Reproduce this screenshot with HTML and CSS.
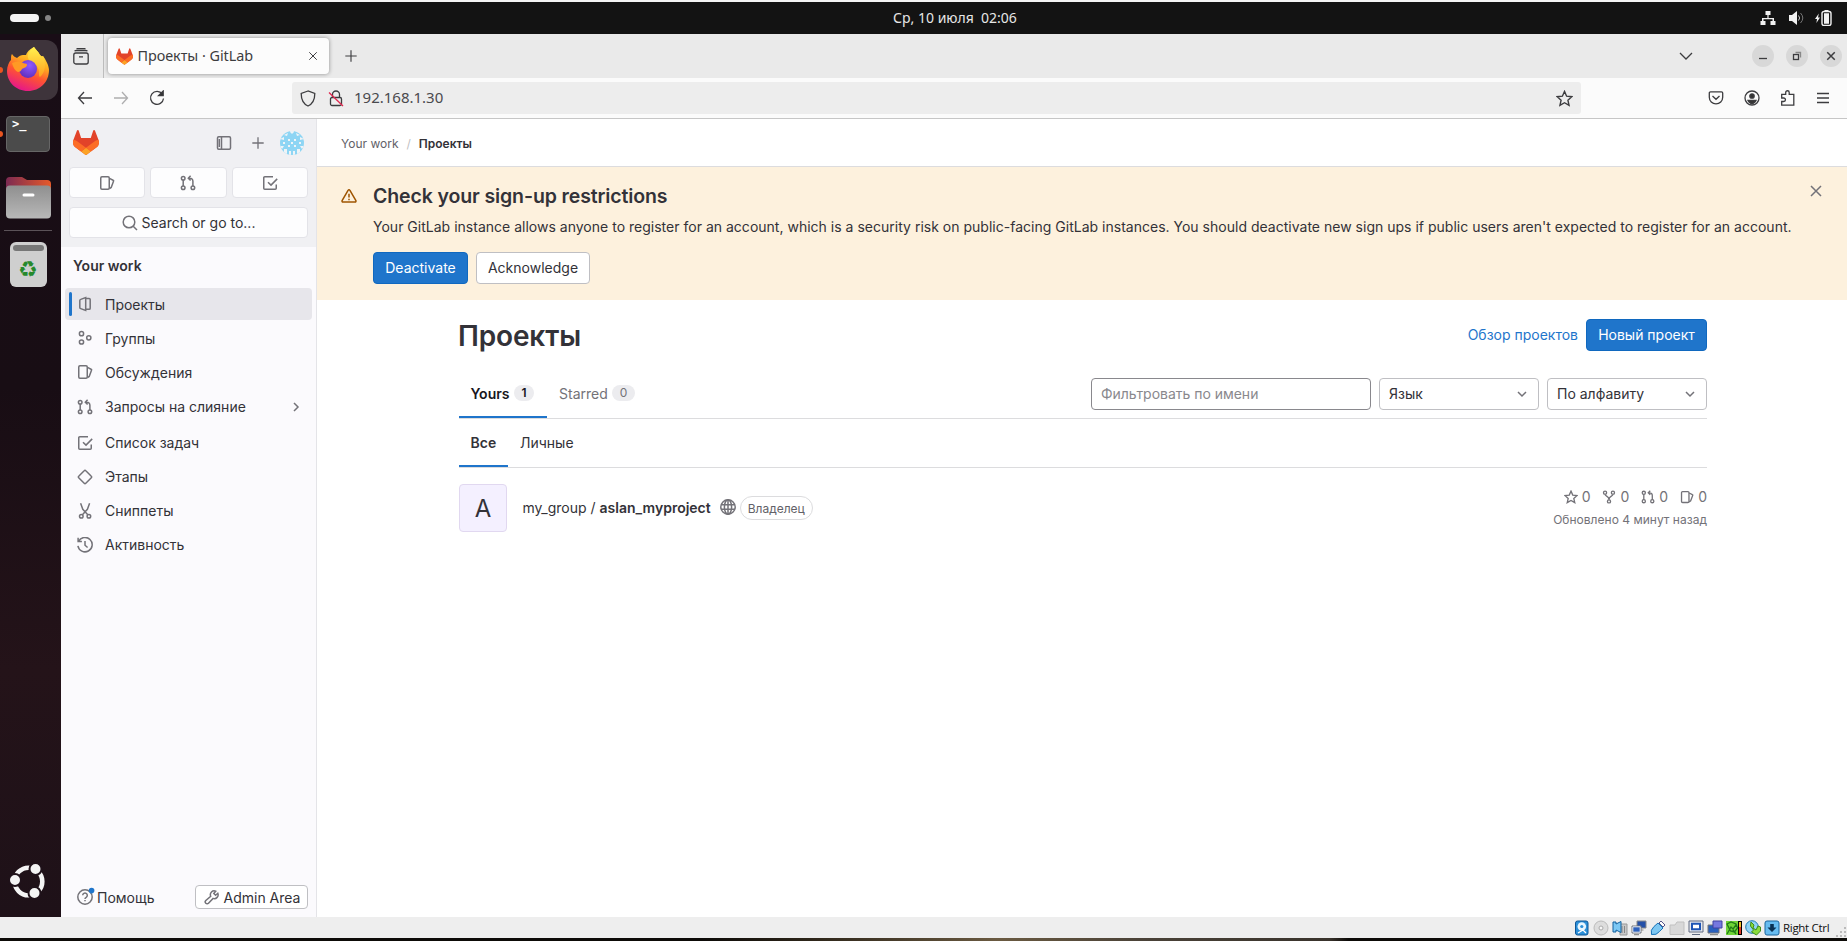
FILE: index.html
```html
<!DOCTYPE html>
<html lang="ru">
<head>
<meta charset="utf-8">
<title>Проекты · GitLab</title>
<link rel="stylesheet" href="styles.css">
</head>
<body>
<svg class="sprite" aria-hidden="true">
  <symbol id="tanuki" viewBox="0 0 25 24">
    <path fill="#E24329" d="M24.507 9.5l-.034-.09L21.082.562a.896.896 0 0 0-1.694.091l-2.29 7.01H7.825L5.535.653a.898.898 0 0 0-1.694-.09L.451 9.411.416 9.5a6.297 6.297 0 0 0 2.09 7.278l.012.01.03.022 5.16 3.867 2.56 1.935 1.554 1.176a1.051 1.051 0 0 0 1.268 0l1.555-1.176 2.56-1.935 5.197-3.89.014-.01A6.297 6.297 0 0 0 24.507 9.5z"/>
    <path fill="#FC6D26" d="M24.507 9.5l-.034-.09a11.44 11.44 0 0 0-4.56 2.051l-7.447 5.632 4.742 3.584 5.197-3.89.014-.01A6.297 6.297 0 0 0 24.507 9.5z"/>
    <path fill="#FCA326" d="M7.707 20.677l2.56 1.935 1.555 1.176a1.051 1.051 0 0 0 1.268 0l1.555-1.176 2.56-1.935-4.743-3.584-4.755 3.584z"/>
    <path fill="#FC6D26" d="M5.01 11.461a11.43 11.43 0 0 0-4.56-2.05L.416 9.5a6.297 6.297 0 0 0 2.09 7.278l.012.01.03.022 5.16 3.867 4.745-3.584-7.444-5.632z"/>
  </symbol>
  <symbol id="issues" viewBox="0 0 16 16"><rect x="1.75" y="1.75" width="8.5" height="12.5" rx="1.2"/><path d="M10.5 3.400l3.600 1.800c.5.2.6.6.4 1L12.200 12.400l-1.700 1.200"/></symbol>
  <symbol id="merge" viewBox="0 0 16 16"><circle cx="3.2" cy="3.2" r="1.8"/><circle cx="3.2" cy="12.8" r="1.8"/><circle cx="12.9" cy="12.8" r="1.8"/><path d="M3.2 5v6M12.9 11V6.2a3 3 0 0 0-3-3H8.6M10.600.8L8.300 3.200l2.300 2.400"/></symbol>
  <symbol id="todo" viewBox="0 0 16 16"><path d="M11 1.75H2.8A1.05 1.05 0 0 0 1.75 2.8v10.4c0 .6.45 1.05 1.05 1.05h10.4c.6 0 1.05-.45 1.05-1.05V9.5M6 7.2l3 2.9 6.2-6.2"/></symbol>
  <symbol id="project" viewBox="0 0 16 16"><path d="M8.700 1.500v13l-5-1.900c-.5-.2-.9-.7-.9-1.200V4.600c0-.5.3-1 .9-1.200zM8.700 2.500h3.400c.6 0 1.100.5 1.100 1.100v8.600c0 .6-.5 1.100-1.100 1.100H8.700"/></symbol>
  <symbol id="group" viewBox="0 0 16 16"><circle cx="4.500" cy="3.700" r="2.100"/><circle cx="4.500" cy="12" r="2.100"/><circle cx="11.800" cy="7.800" r="2.100"/></symbol>
  <symbol id="milestone" viewBox="0 0 16 16"><path d="M7.200 1.700L1.700 7.200a1.100 1.100 0 0 0 0 1.600l5.500 5.500c.45.45 1.150.45 1.600 0l5.500-5.500a1.100 1.100 0 0 0 0-1.600L8.800 1.700a1.100 1.100 0 0 0-1.600 0z"/></symbol>
  <symbol id="snippet" viewBox="0 0 16 16"><circle cx="4.300" cy="13.200" r="1.800"/><circle cx="11.900" cy="13.200" r="1.800"/><path d="M3.600.3l2.200 6 5 5.500M12.600.3l-2.200 6-5 5.500"/></symbol>
  <symbol id="history" viewBox="0 0 16 16"><path d="M1.100.8v3.800h3.800M1.500 4.500a7.200 7.200 0 1 1-.6 4.400M8 4v4.200l2.600 2.300"/></symbol>
  <symbol id="star" viewBox="0 0 16 16"><path d="M8 1.300l2 4.500 4.900.5-3.700 3.300 1.100 4.900L8 12l-4.300 2.500 1.100-4.900L1.100 6.300 6 5.800z"/></symbol>
  <symbol id="fork" viewBox="0 0 16 16"><circle cx="3.500" cy="3" r="1.800"/><circle cx="12.500" cy="3" r="1.800"/><circle cx="8" cy="13" r="1.800"/><path d="M3.500 4.800c0 2.700 4.500 1.800 4.500 6.400 0-4.600 4.500-3.700 4.500-6.400"/></symbol>
  <symbol id="globe" viewBox="0 0 16 16"><circle cx="8" cy="8" r="7.200"/><ellipse cx="8" cy="8" rx="3.600" ry="7.200"/><path d="M1 5.700h14M1 10.300h14M8 .8v14.400"/></symbol>
  <symbol id="cross" viewBox="0 0 16 16"><path d="M3 3l10 10M13 3L3 13"/></symbol>
  <symbol id="plus" viewBox="0 0 16 16"><path d="M8 1.500v13M1.500 8h13"/></symbol>
  <symbol id="down" viewBox="0 0 16 16"><path d="M4 6l4 4 4-4"/></symbol>
</svg>

<div class="topbar">
  <div class="workspaces"><i class="pill"></i><i class="dot"></i></div>
  <div class="clock">Ср, 10 июля&nbsp; 02:06</div>
  <div class="tray">
    <svg width="16" height="16" viewBox="0 0 16 16"><path fill="#f2f2f2" d="M5.500 1h5v4H8.600v3H14v3h1.500v4h-5v-4h2V9.300h-9V11h2v4h-5v-4H2V8h5.400V5H5.500z"/></svg>
    <svg width="16" height="16" viewBox="0 0 16 16"><path fill="#f2f2f2" d="M0 5h3l5-4v14l-5-4H0z"/><path fill="none" stroke="#c5c5c5" d="M9.500 5.500q2.300 2.500 0 5"/><path fill="none" stroke="#777" d="M11.500 3q4.600 5 0 10"/></svg>
    <svg class="battery" width="17" height="16" viewBox="0 0 17 16"><path fill="#f2f2f2" d="M3.800 3.500L0 9h2l-.6 4L5 7.500H3z"/><rect x="7" y="1.500" width="9" height="14" rx="2" fill="none" stroke="#f2f2f2" stroke-width="1.400"/><path fill="#f2f2f2" d="M9 3.300h5v10.400H9zM9.500 0h4v1.500h-4z"/></svg>
  </div>
</div>

<div class="desk">
  <div class="dock">
    <div class="tile">
      <svg width="42" height="44" viewBox="0 0 42 44">
        <defs>
          <linearGradient id="ff" x1=".75" y1="0" x2=".35" y2="1"><stop offset="0" stop-color="#fff04a"/><stop offset=".35" stop-color="#ffae20"/><stop offset=".62" stop-color="#ff5530"/><stop offset="1" stop-color="#e5158c"/></linearGradient>
          <radialGradient id="fp" cx=".6" cy=".3" r=".8"><stop offset="0" stop-color="#9059ff"/><stop offset="1" stop-color="#5b2bb5"/></radialGradient>
          <linearGradient id="fy" x1="0" y1="0" x2="0" y2="1"><stop offset="0" stop-color="#fff24f"/><stop offset="1" stop-color="#ffa01e"/></linearGradient>
        </defs>
        <path fill="url(#ff)" d="M27 0c2 3 4 4 6 8 1 1 2 2 3 1 3 4 6 10 6 14 0 12-9 21-21 21S0 35 0 24c0-5 2-9 4-11 0-3 0-5 1-6 1 2 3 3 5 4 2-2 4-3 6-3l3 0c2-5 5-6 8-8z"/>
        <path fill="url(#fy)" d="M27 0c2 3 4 4 6 8 1 1 2 2 3 1 3 7 3 16-3 21-2-1 0-5-2-9-3-5-8-5-10-10-1-5 3-9 6-11z"/>
        <circle cx="21" cy="22" r="9" fill="url(#fp)"/>
        <path fill="#ff9a25" d="M5 16c4-2 8-2 11 0 2 1 4 0 4 2s-3 3-5 4c-1 2-2 3-4 3-3-1-5-5-6-9z"/>
      </svg>
    </div>
    <i class="run run-one"></i><i class="run run-two"></i>
    <div class="terminal"><b>&gt;_</b></div>
    <svg class="files" width="45" height="42" viewBox="0 0 45 42">
      <defs><linearGradient id="fa"><stop offset="0" stop-color="#7c2a52"/><stop offset="1" stop-color="#e65a2a"/></linearGradient><linearGradient id="fb" x2="0" y2="1"><stop offset="0" stop-color="#8f8f8f"/><stop offset="1" stop-color="#b8b8b8"/></linearGradient></defs>
      <path fill="url(#fa)" d="M0 4q0-4 4-4h12l5 3h20q4 0 4 4v10H0z"/><rect y="8.500" width="45" height="33" rx="4" fill="url(#fb)"/><rect x="16.500" y="16.500" width="12" height="3" rx="1.500" fill="#fff"/>
    </svg>
    <i class="rule"></i>
    <div class="trash"><i></i><b>&#9851;</b></div>
    <svg class="ubuntu" width="36" height="36" viewBox="0 0 36 36">
      <circle cx="19.500" cy="18.500" r="13.800" fill="none" stroke="#f4f4f4" stroke-width="4.600"/>
      <g fill="#f4f4f4" stroke="#1f121a" stroke-width="2"><circle cx="6" cy="17" r="6"/><circle cx="26.500" cy="6" r="6"/><circle cx="25.500" cy="30" r="6"/></g>
    </svg>
  </div>

  <div class="browser">
    <div class="tabstrip">
      <div class="view"><svg width="16" height="17" viewBox="0 0 16 17" class="ink"><rect x=".8" y="5" width="14.400" height="11" rx="2"/><path d="M1.500 3q1-.5 2-.5h9q1 0 2 .5M3.500.7h9M6 8.800h4"/></svg></div>
      <div class="tab"><svg width="17" height="17"><use href="#tanuki"/></svg><span class="tab-title">Проекты · GitLab</span><svg width="12" height="12" class="ink"><use href="#cross"/></svg></div>
      <svg width="14" height="14" class="ink newtab"><use href="#plus"/></svg>
      <svg width="14" height="8" viewBox="0 0 14 8" class="ink tabs-more"><path d="M1 1l6 6 6-6"/></svg>
      <div class="winbtns">
        <span><svg width="10" height="10" viewBox="0 0 10 10" class="ink"><path d="M1 7.500h8"/></svg></span>
        <span><svg width="10" height="10" viewBox="0 0 10 10" class="ink"><rect x="1.500" y="3.500" width="5" height="5"/><path stroke="#888" d="M3.500 1.500h5v5"/></svg></span>
        <span><svg width="12" height="12" class="ink bold"><use href="#cross"/></svg></span>
      </div>
    </div>
    <div class="toolbar">
      <div class="nav-btns">
        <svg width="16" height="16" viewBox="0 0 16 16" class="ink"><path d="M15 8H1.500M7 2L1.500 8 7 14"/></svg>
        <svg width="16" height="16" viewBox="0 0 16 16" class="ink off"><path d="M1 8h13.500M9 2l5.500 6L9 14"/></svg>
        <svg width="16" height="16" viewBox="0 0 16 16" class="ink"><path d="M13.300 4A6.500 6.500 0 1 0 14.500 8.500"/><path fill="#333" d="M14.200 1v4.600H9.600z"/></svg>
      </div>
      <div class="urlbar">
        <svg width="16" height="17" viewBox="0 0 16 17" class="ink"><path d="M8 1L1.200 3.500c0 6 1.300 10 6.800 12.500 5.500-2.500 6.800-6.500 6.800-12.500z"/></svg>
        <svg width="16" height="17" viewBox="0 0 16 17" class="ink lock"><rect x="2.500" y="7.500" width="11" height="8" rx="1.500"/><path d="M4.500 7V4.500a3.500 3.500 0 0 1 7 0V7"/><path stroke="#e0284f" d="M1 2.500l14 13.500"/></svg>
        <span class="url">192.168.1.30</span>
        <svg width="17" height="17" class="ink bookmark"><use href="#star"/></svg>
      </div>
      <div class="tools">
        <svg width="16" height="16" viewBox="0 0 16 16" class="ink"><path d="M2.500 1.800h11q1.200 0 1.200 1.200v4.200a6.700 6.700 0 0 1-13.400 0V3q0-1.200 1.200-1.200zM4.500 6L8 9.300 11.500 6"/></svg>
        <svg width="16" height="16" viewBox="0 0 16 16" class="ink"><circle cx="8" cy="8" r="7"/><circle cx="8" cy="6" r="2.200" fill="#333"/><path fill="#333" d="M4 10.500h8q-1.500 3-4 3t-4-3z"/></svg>
        <svg width="16" height="16" viewBox="0 0 16 16" class="ink"><path d="M1.700 15.200v-3.700h2a1.700 1.700 0 0 0 0-3.500h-2V4.300h4V2.500a1.700 1.700 0 0 1 3.500 0v1.800h4.600v10.900z"/></svg>
        <svg width="14" height="14" viewBox="0 0 14 14" class="ink"><path d="M1 2.500h12M1 7h12M1 11.500h12"/></svg>
      </div>
    </div>

    <div class="page">
      <aside class="side">
        <div class="side-top">
          <div class="brand">
            <svg width="26" height="25"><use href="#tanuki"/></svg>
            <svg width="16" height="16" viewBox="0 0 16 16" class="gl collapse"><rect x="1.500" y="1.700" width="13" height="12.600" rx="1.200"/><path d="M5.500 2v12M3.300 4v8" /></svg>
            <svg width="14" height="14" class="gl add"><use href="#plus"/></svg>
            <svg width="24" height="24" viewBox="0 0 24 24" class="avatar"><defs><clipPath id="rnd"><circle cx="12" cy="12" r="12"/></clipPath></defs><g clip-path="url(#rnd)"><rect width="24" height="24" fill="#8ed5f4"/><path fill="#f0f4f7" d="M10 1l2 2 2-2v-1h-4zM4 4l4-2-1 3zM20 4l-4-2 1 3zM0 8l4-2v3zM24 8l-4-2v3zM0 15h4l-2 3zM24 15h-4l2 3zM8 8h2v2H8zM14 8h2v2h-2zM8 14h2v2H8zM14 14h2v2h-2zM11 11h2v2h-2zM3 11h2v2H3zM19 11h2v2h-2zM4 18h3v5H4zM17 18h3v5h-3zM9 20h2v4H9zM13 20h2v4h-2z"/></g></svg>
          </div>
          <div class="quick">
            <span><svg width="16" height="16" class="gl"><use href="#issues"/></svg></span>
            <span><svg width="16" height="16" class="gl"><use href="#merge"/></svg></span>
            <span><svg width="16" height="16" class="gl"><use href="#todo"/></svg></span>
          </div>
          <div class="search"><svg width="16" height="16" viewBox="0 0 16 16" class="gl"><circle cx="7" cy="7" r="5.800"/><path d="M11.200 11.200L15 15"/></svg><span>Search or go to...</span></div>
        </div>
        <h2 class="side-title">Your work</h2>
        <nav class="menu">
          <a class="item on"><svg width="16" height="16" class="gl"><use href="#project"/></svg>Проекты</a>
          <a class="item"><svg width="16" height="16" class="gl"><use href="#group"/></svg>Группы</a>
          <a class="item"><svg width="16" height="16" class="gl"><use href="#issues"/></svg>Обсуждения</a>
          <a class="item more"><svg width="16" height="16" class="gl"><use href="#merge"/></svg>Запросы на слияние<svg width="16" height="16" viewBox="0 0 16 16" class="gl chev"><path d="M6 4l4 4-4 4"/></svg></a>
          <a class="item"><svg width="16" height="16" class="gl"><use href="#todo"/></svg>Список задач</a>
          <a class="item"><svg width="16" height="16" class="gl"><use href="#milestone"/></svg>Этапы</a>
          <a class="item"><svg width="16" height="16" class="gl"><use href="#snippet"/></svg>Сниппеты</a>
          <a class="item"><svg width="16" height="16" class="gl"><use href="#history"/></svg>Активность</a>
        </nav>
        <div class="side-foot">
          <span class="help"><svg width="18" height="18" viewBox="0 0 18 18" class="gl"><circle cx="8" cy="10" r="7.200"/><path d="M5.700 8.300a2.300 2.300 0 1 1 3.500 2q-1.200.7-1.200 1.700M8 12.900v1.300"/><circle cx="14.600" cy="3.600" r="2.800" fill="#1f75cb" stroke="none"/></svg>Помощь</span>
          <span class="admin"><svg width="16" height="16" viewBox="0 0 16 16" class="gl"><path d="M13.800 4.300l-2.200 1.900-1.800-1.700 1.900-2.300a3.800 3.800 0 0 0-5 5L1.800 11.500a1.800 1.800 0 0 0 2.700 2.700l4.600-4.800a3.800 3.800 0 0 0 4.700-5.100z"/></svg>Admin Area</span>
        </div>
      </aside>

      <main class="main">
        <div class="crumbs"><span>Your work</span><i>/</i><b>Проекты</b></div>
        <section class="banner">
          <svg width="16" height="16" viewBox="0 0 16 16" class="warn"><path d="M7.200 2.200L1.100 12.700c-.3.600.1 1.400.8 1.400h12.200c.7 0 1.100-.8.8-1.400L8.800 2.200a.9.9 0 0 0-1.600 0zM8 5.800v3.600M8 10.700v1.500"/></svg>
          <div class="banner-body">
            <h2>Check your sign-up restrictions</h2>
            <p>Your GitLab instance allows anyone to register for an account, which is a security risk on public-facing GitLab instances. You should deactivate new sign ups if public users aren't expected to register for an account.</p>
            <div class="actions"><span class="btn primary deact">Deactivate</span><span class="btn ack">Acknowledge</span></div>
          </div>
          <svg width="16" height="16" class="gl"><use href="#cross"/></svg>
        </section>

        <div class="content">
          <header class="head"><h1>Проекты</h1><div class="head-right"><a class="link">Обзор проектов</a><span class="btn primary create">Новый проект</span></div></header>
          <div class="tabs">
            <div class="t on yours">Yours<em>1</em></div>
            <div class="t starred">Starred<em>0</em></div>
            <div class="filters">
              <span class="field name">Фильтровать по имени</span>
              <span class="field pick">Язык<svg width="16" height="16" class="gl"><use href="#down"/></svg></span>
              <span class="field pick">По алфавиту<svg width="16" height="16" class="gl"><use href="#down"/></svg></span>
            </div>
          </div>
          <div class="tabs sub"><div class="t on all">Все</div><div class="t own">Личные</div></div>
          <div class="project">
            <span class="letter">A</span>
            <span class="pname">my_group / <b>aslan_myproject</b></span>
            <svg width="16" height="16" class="gl globe"><use href="#globe"/></svg>
            <span class="role">Владелец</span>
            <div class="meta">
              <div class="stats">
                <span><svg width="14" height="14" class="gl"><use href="#star"/></svg>0</span>
                <span><svg width="14" height="14" class="gl"><use href="#fork"/></svg>0</span>
                <span><svg width="14" height="14" class="gl"><use href="#merge"/></svg>0</span>
                <span><svg width="14" height="14" class="gl"><use href="#issues"/></svg>0</span>
              </div>
              <div class="updated">Обновлено 4 минут назад</div>
            </div>
          </div>
        </div>
      </main>
    </div>
  </div>
</div>

<div class="vmbar">
  <svg width="16" height="16" viewBox="0 0 16 16"><rect x="1.500" y="1" width="12.500" height="14" rx="2" fill="#2b8fd8" stroke="#0e5797"/><circle cx="7.800" cy="6.500" r="4.300" fill="#e8f6ff"/><circle cx="7.800" cy="6.500" r="1.600" fill="#2b8fd8"/><path d="M4 13l5-3 3 3" stroke="#fff" stroke-width="1.300" fill="none"/></svg>
  <svg width="16" height="16" viewBox="0 0 16 16"><circle cx="8" cy="8" r="7" fill="#ddd" stroke="#bbb"/><circle cx="8" cy="8" r="2" fill="#f8f8f8" stroke="#aaa"/></svg>
  <svg width="16" height="16" viewBox="0 0 16 16"><path d="M8 4h7v11H8z" fill="#c8c8c8" stroke="#999"/><path d="M10 6v7M12.500 6v7" stroke="#888"/><path d="M1 2h3v2l5-2.500v11L4 10v2H1z" fill="#7cc8f4" stroke="#12609f"/></svg>
  <svg width="16" height="16" viewBox="0 0 16 16"><path d="M6 1h9v7H6zM8.500 10h4" fill="#2450a8" stroke="#8a8a8a"/><path d="M7.500 2.500h6v4h-6z" fill="#2450a8"/><path d="M1 6h9v7H1zM3 14.700h5" fill="#2e62bd" stroke="#777"/><path d="M1.800 6.800h7.400v5.400H1.800z" fill="none" stroke="#eee"/></svg>
  <svg width="16" height="16" viewBox="0 0 16 16"><path d="M1.500 14.500Q0 10 4 6.500L8 3l5 5-3.500 3.500q-3 4-8 3z" fill="#7ec8f2" stroke="#1874b8"/><path d="M9 3l2-2 4 4-2 2z" fill="#fff" stroke="#558"/></svg>
  <svg width="16" height="16" viewBox="0 0 16 16"><path d="M1 14.500V5h5l2-3h7v12.500z" fill="#d8d8d8" stroke="#c0c0c0"/></svg>
  <svg width="16" height="16" viewBox="0 0 16 16"><path d="M1 1h14v11H1zM4 14.500h8" fill="#e6e9ef" stroke="#606b80"/><path d="M4 3.800h8v5.400H4z" fill="#fff" stroke="#1e55b5" stroke-width="2"/></svg>
  <svg width="16" height="16" viewBox="0 0 16 16"><path d="M1 5h11v8H1zM3 14.700h8" fill="#2960bd" stroke="#777"/><path d="M6 1h9v7H6z" fill="#7678df" stroke="#4141a1"/></svg>
  <svg width="16" height="16" viewBox="0 0 16 16"><path d="M0 1h12v14H0z" fill="#6fd436"/><path d="M1 4l4-2 5 2 1.500 4-3 4-4-1zM1 14l4-7 2 2 3-4M7 10l3 4" fill="none" stroke="#1f7a18" stroke-width="1.300"/><path d="M12 1h4v14h-4z"/><path d="M13 2h2v5h-2z" fill="#f1c02a"/><path d="M13 7h2v7h-2z" fill="#df3929"/></svg>
  <svg width="16" height="16" viewBox="0 0 16 16"><circle cx="7" cy="7" r="6.300" fill="#8fd2f5" stroke="#217cb5"/><path d="M6 2l3 3-1 3 3 2 2-4 2.500 1v4l-4 4-5-3 2-2-3-4z" fill="#8bdc3d" stroke="#3b8c18"/></svg>
  <svg width="16" height="16" viewBox="0 0 16 16"><rect x="1" y="1" width="14" height="14" rx="2" fill="#67bcf0" stroke="#1b659d"/><path d="M6.200 4h3.600v3.500h2.700L8 12 3.500 7.500h2.700z" fill="#093052"/></svg>
  <span>Right Ctrl</span>
  <svg width="11" height="11" viewBox="0 0 11 11" class="grip"><path fill="#bbb" d="M8 0h2v2H8zM4 4h2v2H4zM8 4h2v2H8zM0 8h2v2H0zM4 8h2v2H4zM8 8h2v2H8z"/></svg>
</div>
<div class="edge"></div>
</body>
</html>
```
FILE: styles.css
```css
* { box-sizing: border-box; }
html, body { margin: 0; padding: 0; }
body {
  width: 1847px; height: 941px; overflow: hidden;
  display: flex; flex-direction: column;
  border-top: 2px solid #f4f4f4;
  font-family: Inter, "Noto Sans", sans-serif; font-size: 14px; color: #333238;
  background: #fff;
}
h1, h2, p { margin: 0; }
svg { display: block; flex: none; }
i, em { font-style: normal; }
.sprite { position: absolute; width: 0; height: 0; }
.ink { fill: none; stroke: #3c3c3f; stroke-width: 1.3; }
.ink.bold { stroke-width: 2; }
.gl { fill: none; stroke: #737278; stroke-width: 1.5; }

/* system bar */
.topbar {
  height: 32px; flex: none; background: #131313; color: #e6e6e6;
  display: grid; grid-template-columns: 1fr auto 1fr; align-items: center;
  font: 14px "Noto Sans", sans-serif;
}
.workspaces { display: flex; align-items: center; gap: 6px; padding-left: 10px; }
.pill { width: 29px; height: 8px; border-radius: 4px; background: #f4f4f4; }
.dot { width: 6px; height: 6px; border-radius: 50%; background: #858585; }
.clock { margin-left: 63px; padding-bottom: 2px; }
.tray { display: flex; gap: 13px; justify-content: flex-end; padding-right: 15px; }
.battery { margin-left: -3px; }

.desk { height: 883px; flex: none; display: flex; }
.dock {
  position: relative; width: 61px; flex: none;
  display: flex; flex-direction: column; padding-top: 6px;
  background: linear-gradient(#190d16, #180d14 40%, #241319 72%, #1e1118);
}
.tile { width: 58px; height: 60px; border-radius: 0 12px 12px 0; background: #3e343b; display: flex; padding: 7px 0 0 7px; }
.run { position: absolute; left: -3px; width: 6px; height: 6px; border-radius: 50%; background: #e95420; }
.run-one { top: 33px; }
.run-two { top: 97px; }
.terminal { width: 44px; height: 36px; margin: 16px 0 0 6px; border-radius: 4px; background: #4b4b4b; border: 1px solid #666; padding: 0 0 0 5px; color: #fff; font: 12px/14px "DejaVu Sans Mono", monospace; }
.files { margin: 25px 0 0 6px; }
.rule { width: 48px; height: 1px; margin: 11px 0 0 4px; background: #5b5258; }
.trash { width: 37px; height: 45px; margin: 11px 0 0 9.500px; border-radius: 6px; background: #cfcfcf; padding-top: 3px; display: flex; flex-direction: column; align-items: center; }
.trash i { width: 31px; height: 6px; border-radius: 3px; background: #777; }
.trash b { margin-top: 4px; font: 22px/30px "DejaVu Sans", sans-serif; color: #26892c; }
.ubuntu { margin: auto 0 18px 9px; }

/* browser chrome */
.browser { flex: 1; display: flex; flex-direction: column; min-width: 0; }
.tabstrip { height: 44px; flex: none; background: #eaeaea; display: flex; align-items: center; }
.view { width: 43px; height: 44px; padding: 14px 0 0 12px; border-right: 1px solid #bdbdbd; }
.tab {
  width: 221px; height: 36px; margin-left: 4px; padding: 0 10px 0 8px;
  display: flex; align-items: center; border-radius: 4px; background: #fcfcfc;
  box-shadow: 0 0 4px rgba(0,0,0,.4); color: #3c3c3f;
  font: 14.400px "Noto Sans", sans-serif;
}
.tab-title { margin-left: 4.500px; flex: 1; white-space: nowrap; padding-bottom: 2px; letter-spacing: -.04px; }
.newtab { margin-left: 14.500px; }
.tabs-more { margin-left: auto; }
.winbtns { display: flex; gap: 12px; margin: 0 5px 0 59px; }
.winbtns span { width: 22px; height: 22px; border-radius: 50%; background: #d8d8d8; display: flex; align-items: center; justify-content: center; }
.toolbar { height: 41px; flex: none; background: #fbfbfb; border-bottom: 1px solid #c6c6c6; display: flex; align-items: center; }
.nav-btns { width: 231px; display: flex; gap: 20px; padding-left: 16px; }
.off { opacity: .4; }
.urlbar { width: 1289px; height: 32px; border-radius: 3px; background: #ededed; display: flex; align-items: center; padding: 0 8px; }
.lock { margin-left: 12px; }
.url { margin-left: 10px; padding-bottom: 2px; font: 15px "Noto Sans", sans-serif; color: #4a4a4d; }
.bookmark { margin-left: auto; }
.tools { display: flex; align-items: center; gap: 20px; margin-left: 127px; }

/* sidebar */
.page { flex: 1; display: flex; min-height: 0; }
.side { width: 256px; flex: none; border-right: 1px solid #e4e4e8; background: #fbfafd; display: flex; flex-direction: column; }
.side-top { height: 128px; background: #f0f0f3; padding: 11px 8px 0 8px; }
.brand { height: 25px; display: flex; align-items: center; padding-left: 4px; }
.collapse { margin-left: 117px; }
.add { margin-left: 19px; }
.avatar { margin-left: 15px; }
.quick { display: grid; grid-template-columns: repeat(3, 1fr); gap: 5px; margin-top: 12px; }
.quick span, .search { height: 31px; border: 1px solid #e3e3e8; border-radius: 4px; background: #fdfdfe; display: flex; align-items: center; justify-content: center; }
.search { margin-top: 9px; gap: 4px; }
.side-title { font-size: 14px; font-weight: 600; line-height: 20px; margin: 9px 0 12px 12px; }
.menu { display: flex; flex-direction: column; gap: 2px; padding: 0 4px; }
.item { height: 32px; display: flex; align-items: center; gap: 12px; padding-left: 12px; border-radius: 4px; }
.item.on { background: #e7e6eb; padding-left: 4px; }
.item.on::before { content: ""; width: 3px; height: 24px; border-radius: 2px; background: #1f75cb; margin-right: -7px; }
.item.more { padding-right: 8px; height: 33px; margin-bottom: 1.500px; }
.chev { margin-left: auto; }
.side-foot { margin-top: auto; padding: 0 8px 8px 16px; display: flex; justify-content: space-between; align-items: center; }
.help { display: flex; align-items: center; gap: 2px; }
.help svg { margin-top: -2px; }
.admin { width: 113px; height: 24px; border: 1px solid #bfbfc3; border-radius: 4px; background: #fff; display: flex; align-items: center; justify-content: center; gap: 4px; white-space: nowrap; padding-left: 1px; }

/* main column */
.main { flex: 1; min-width: 0; background: #fff; }
.crumbs { height: 48px; border-bottom: 1px solid #dcdcde; padding: 2px 0 0 24px; display: flex; align-items: center; gap: 8px; font-size: 12px; color: #626168; }
.crumbs i { color: #bfbfc3; }
.crumbs b { font-weight: 600; color: #333238; }
.banner { height: 133px; background: #fdf1dd; display: flex; padding: 16px 23px 0 24px; }
.warn { margin-top: 5px; fill: none; stroke: #9e5400; stroke-width: 1.500; }
.banner-body { flex: 1; margin-left: 16px; }
.banner h2 { font-size: 19.500px; line-height: 26px; font-weight: 600; letter-spacing: -.12px; }
.banner p { line-height: 20px; margin-top: 8px; white-space: nowrap; letter-spacing: .011px; }
.actions { display: flex; gap: 8px; margin-top: 15px; }
.btn { height: 32px; border-radius: 4px; border: 1px solid #bfbfc3; background: #fff; display: flex; align-items: center; justify-content: center; white-space: nowrap; padding-bottom: 1px; }
.primary { background: #1f75cb; border-color: #1068bf; color: #fff; }
.deact { width: 95px; }
.ack { width: 114px; }
.create { width: 121px; }
.content { margin-left: 142px; width: 1248px; padding-top: 19px; }
.head { display: flex; justify-content: space-between; height: 32px; align-items: center; }
.head h1 { font-size: 28px; font-weight: 600; letter-spacing: -.15px; padding-top: 2px; margin-left: -1px; }
.head-right { display: flex; align-items: center; gap: 8px; }
.link { color: #1f75cb; white-space: nowrap; padding-bottom: 1px; }
.tabs { height: 68px; border-bottom: 1px solid #dcdcde; display: flex; padding-top: 19px; }
.t { display: flex; align-items: center; padding: 0 12px; color: #737278; border-bottom: 2px solid transparent; height: 48px; }
.t.on { font-weight: 600; color: #18171d; border-color: #1f75cb; padding-left: 11.500px; }
.yours { width: 88px; }
.t em { margin-left: 4.500px; height: 16px; line-height: 16px; padding: 0 7.500px; border-radius: 8px; background: #ececef; font-size: 12px; }
.filters { margin-left: auto; display: flex; gap: 8px; padding-top: 8px; }
.field { height: 32px; width: 160px; border: 1px solid #bfbfc3; border-radius: 4px; padding: 0 8px 1px 9px; display: flex; align-items: center; justify-content: space-between; }
.name { width: 280px; border-color: #89888d; color: #89888d; letter-spacing: -.02px; }
.tabs.sub { height: 49px; padding-top: 0; }
.tabs.sub .t { color: #333238; }
.all { width: 49px; }
.project { display: flex; align-items: center; height: 48px; margin-top: 16px; }
.letter { width: 48px; height: 48px; border: 1px solid #e1d8f0; border-radius: 4px; background: #f4f0ff; font-size: 24px; display: flex; align-items: center; justify-content: center; }
.pname { margin-left: 15.500px; padding-bottom: 2px; white-space: nowrap; }
.pname b { font-weight: 600; }
.globe { margin-left: 9px; margin-top: -2px; }
.role { margin-left: 4px; width: 73px; height: 24px; border: 1px solid #dcdcde; border-radius: 12px; font-size: 12px; color: #626168; display: flex; align-items: center; justify-content: center; }
.meta { margin-left: auto; color: #737278; }
.stats { display: flex; justify-content: flex-end; gap: 12px; line-height: 20px; margin-top: -1px; }
.stats span { display: flex; align-items: center; gap: 4px; }
.updated { font-size: 12px; line-height: 16px; margin-top: 5px; white-space: nowrap; letter-spacing: .02px; }

/* virtual machine status bar */
.vmbar { height: 21px; flex: none; background: #eeeeee; display: flex; align-items: center; justify-content: flex-end; gap: 3px; font: 11.500px "Open Sans", sans-serif; color: #111; }
.vmbar span { width: 46px; white-space: nowrap; letter-spacing: -.3px; }
.grip { align-self: flex-end; margin-left: 4px; }
.edge { height: 3px; flex: none; background: linear-gradient(90deg, #0d0b08 38%, #2e261a 44%, #6a5a41 54%, #4a4238 62%, #39332c 72%, #0d0b08 73%); }
```
